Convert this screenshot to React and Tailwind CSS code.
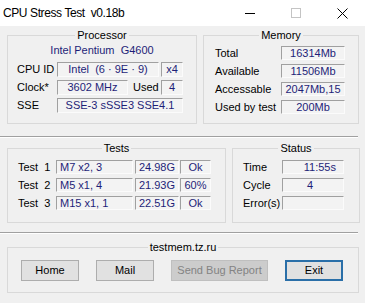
import React from "react";

const tests = [
  { n: "1", mode: "M7 x2, 3", speed: "24.98G", state: "Ok" },
  { n: "2", mode: "M5 x1, 4", speed: "21.93G", state: "60%" },
  { n: "3", mode: "M15 x1, 1", speed: "22.51G", state: "Ok" },
];

const memory = [
  ["Total", "16314Mb"],
  ["Available", "11506Mb"],
  ["Accessable", "2047Mb,15"],
  ["Used by test", "200Mb"],
];

function Field({ className = "", children }) {
  return (
    <div
      className={
        "flex items-center border border-t-[#a0a0a0] border-l-[#a0a0a0] border-r-[#fbfbfb] border-b-[#fbfbfb] bg-[#f3f3f3] text-[#1e1e78] leading-none whitespace-pre " +
        className
      }
    >
      {children}
    </div>
  );
}

function Group({ title, className = "", children }) {
  return (
    <fieldset className={"border border-[#d9d9d9] " + className}>
      <legend className="mx-auto px-[2px] leading-[13px]">{title}</legend>
      {children}
    </fieldset>
  );
}

function Separator({ className = "" }) {
  return (
    <div className={"w-[358px] border-t border-t-[#a0a0a0] border-b border-b-white " + className} />
  );
}

function TitleBar() {
  return (
    <div className="flex h-[26px] items-center bg-white">
      <span className="pl-[3px] text-[12px] tracking-[-0.4px] whitespace-pre">CPU Stress Test  v0.18b</span>
      <div className="ml-auto flex h-full">
        <div className="flex w-[46px] items-center justify-center">
          <div className="h-px w-[10px] bg-black" />
        </div>
        <div className="flex w-[46px] items-center justify-center">
          <div className="h-[10px] w-[10px] border border-[#c4c4c4]" />
        </div>
        <div className="flex w-[46px] items-center justify-center">
          <svg width="11" height="11" viewBox="0 0 11 11">
            <path d="M0.5 0.5 L10.5 10.5 M10.5 0.5 L0.5 10.5" stroke="#000" strokeWidth="1" />
          </svg>
        </div>
      </div>
    </div>
  );
}

export default function App() {
  return (
    <div className="h-[303px] w-[365px] overflow-hidden bg-[#f0f0f0] font-['Liberation_Sans',Arial,sans-serif] text-[11px] text-black">
      <TitleBar />

      {/* processor / memory */}
      <div className="mt-[3px] flex pl-[7px]">
        <Group title="Processor" className="h-[95px] w-[190px]">
          <div className="mt-px h-[14px] text-center leading-[14px] text-[#1e1e78] whitespace-pre">
            Intel Pentium  G4600
          </div>
          <div className="mt-[5px] flex h-[15px] items-center pl-[9px]">
            <span className="w-[40px]">CPU ID</span>
            <Field className="h-[15px] w-[102px] justify-center">Intel  (6 · 9E · 9)</Field>
            <Field className="ml-[2px] h-[15px] w-[22px] justify-center">x4</Field>
          </div>
          <div className="mt-[3px] flex h-[15px] items-center pl-[9px]">
            <span className="w-[40px]">Clock*</span>
            <Field className="h-[15px] w-[71px] justify-center">3602 MHz</Field>
            <span className="w-[33px] pl-[5px]">Used</span>
            <Field className="h-[15px] w-[22px] justify-center">4</Field>
          </div>
          <div className="mt-[3px] flex h-[15px] items-center pl-[9px]">
            <span className="w-[40px]">SSE</span>
            <Field className="h-[15px] w-[126px] justify-center">SSE-3 sSSE3 SSE4.1</Field>
          </div>
        </Group>

        <Group title="Memory" className="ml-[6px] h-[95px] w-[156px]">
          <div className="mt-[4px] flex flex-col gap-[4px] pl-[11px]">
            {memory.map(([label, value]) => (
              <div key={label} className="flex h-[14px] items-center">
                <span className="w-[66px] whitespace-nowrap">{label}</span>
                <Field className="h-[14px] w-[64px] justify-center">{value}</Field>
              </div>
            ))}
          </div>
        </Group>
      </div>

      <Separator className="mt-[12px]" />

      {/* tests / status */}
      <div className="mt-[4px] flex pl-[7px]">
        <Group title="Tests" className="h-[81px] w-[219px]">
          <div className="mt-[5px] flex flex-col gap-[4px] pl-[10px]">
            {tests.map((t) => (
              <div key={t.n} className="flex h-[14px] items-center">
                <span className="w-[38px] whitespace-pre">Test  {t.n}</span>
                <Field className="h-[14px] w-[77px] pl-[3px]">{t.mode}</Field>
                <Field className="ml-[2px] h-[14px] w-[44px] justify-center">{t.speed}</Field>
                <Field className="ml-px h-[14px] w-[31px] justify-center">{t.state}</Field>
              </div>
            ))}
          </div>
        </Group>

        <Group title="Status" className="ml-[6px] h-[81px] w-[128px]">
          <div className="mt-[5px] flex flex-col gap-[4px] pl-[10px]">
            <div className="flex h-[14px] items-center">
              <span className="w-[39px]">Time</span>
              <Field className="h-[14px] w-[62px] justify-end pr-[7px]">11:55s</Field>
            </div>
            <div className="flex h-[14px] items-center">
              <span className="w-[39px]">Cycle</span>
              <Field className="h-[14px] w-[62px] justify-center pr-[6px]">4</Field>
            </div>
            <div className="flex h-[14px] items-center">
              <span className="w-[39px]">Error(s)</span>
              <Field className="h-[14px] w-[62px]" />
            </div>
          </div>
        </Group>
      </div>

      <Separator className="mt-[9px]" />

      {/* links */}
      <div className="mt-[7px] pl-[7px]">
        <Group title="testmem.tz.ru" className="h-[52px] w-[352px]">
          <div className="mt-[6px] flex pl-[13px]">
            <button className="h-[21px] w-[58px] border border-[#adadad] bg-[#e1e1e1] text-[11px]">Home</button>
            <button className="ml-[17px] h-[21px] w-[58px] border border-[#adadad] bg-[#e1e1e1] text-[11px]">Mail</button>
            <button className="ml-[17px] h-[21px] w-[97px] border border-[#bfbfbf] bg-[#cccccc] text-[11px] text-[#838383]">
              Send Bug Report
            </button>
            <button className="ml-[17px] h-[21px] w-[58px] border-2 border-[#2a6fa8] bg-[#e1e1e1] text-[11px]">Exit</button>
          </div>
        </Group>
      </div>
    </div>
  );
}
